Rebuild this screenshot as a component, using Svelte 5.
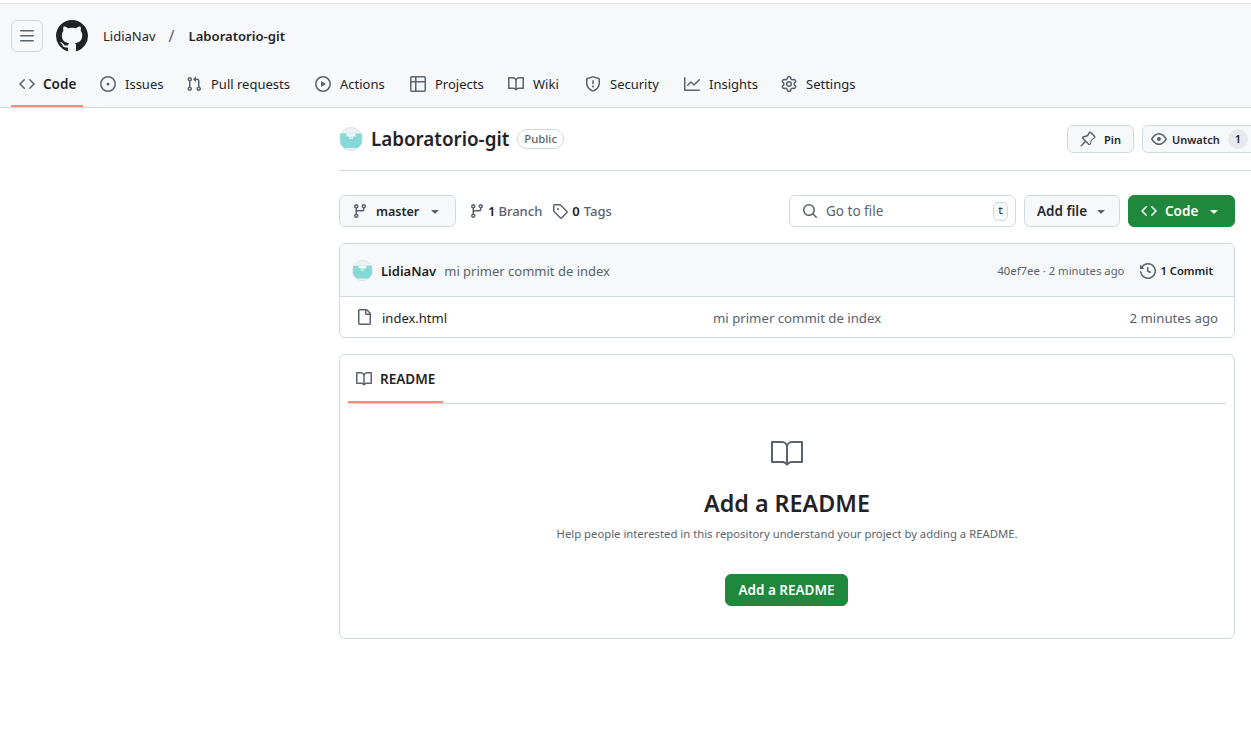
<script>
	const P = {
		code: 'm11.28 3.22 4.25 4.25a.75.75 0 0 1 0 1.06l-4.25 4.25a.749.749 0 0 1-1.275-.326.749.749 0 0 1 .215-.734L13.94 8l-3.72-3.72a.749.749 0 0 1 .326-1.275.749.749 0 0 1 .734.215Zm-6.56 0a.751.751 0 0 1 1.042.018.751.751 0 0 1 .018 1.042L2.06 8l3.72 3.72a.749.749 0 0 1-.326 1.275.749.749 0 0 1-.734-.215L.47 8.53a.75.75 0 0 1 0-1.06Z',
		issue: 'M8 9.5a1.5 1.5 0 1 0 0-3 1.5 1.5 0 0 0 0 3ZM8 0a8 8 0 1 1 0 16A8 8 0 0 1 8 0ZM1.5 8a6.5 6.5 0 1 0 13 0 6.5 6.5 0 0 0-13 0Z',
		pull: 'M1.5 3.25a2.25 2.25 0 1 1 3 2.122v5.256a2.251 2.251 0 1 1-1.5 0V5.372A2.25 2.25 0 0 1 1.5 3.25Zm5.677-.177L9.573.677A.25.25 0 0 1 10 .854V2.5h1A2.5 2.5 0 0 1 13.5 5v5.628a2.251 2.251 0 1 1-1.5 0V5a1 1 0 0 0-1-1h-1v1.646a.25.25 0 0 1-.427.177L7.177 3.427a.25.25 0 0 1 0-.354ZM3.75 2.5a.75.75 0 1 0 0 1.5.75.75 0 0 0 0-1.5Zm0 9.5a.75.75 0 1 0 0 1.5.75.75 0 0 0 0-1.5Zm8.25.75a.75.75 0 1 0 1.5 0 .75.75 0 0 0-1.5 0Z',
		play: 'M8 0a8 8 0 1 1 0 16A8 8 0 0 1 8 0ZM1.5 8a6.5 6.5 0 1 0 13 0 6.5 6.5 0 0 0-13 0Zm4.879-2.773 4.264 2.559a.25.25 0 0 1 0 .428l-4.264 2.559A.25.25 0 0 1 6 10.559V5.442a.25.25 0 0 1 .379-.215Z',
		table: 'M0 1.75C0 .784.784 0 1.75 0h12.5C15.216 0 16 .784 16 1.75v12.5A1.75 1.75 0 0 1 14.25 16H1.75A1.75 1.75 0 0 1 0 14.25ZM6.5 6.5v8h7.75a.25.25 0 0 0 .25-.25V6.5Zm8-1.5V1.75a.25.25 0 0 0-.25-.25H6.5V5Zm-13 1.5v7.75c0 .138.112.25.25.25H5v-8ZM5 5V1.5H1.75a.25.25 0 0 0-.25.25V5Z',
		book: 'M0 1.75A.75.75 0 0 1 .75 1h4.253c1.227 0 2.317.59 3 1.501A3.743 3.743 0 0 1 11.006 1h4.245a.75.75 0 0 1 .75.75v10.5a.75.75 0 0 1-.75.75h-4.507a2.25 2.25 0 0 0-1.591.659l-.622.621a.75.75 0 0 1-1.06 0l-.622-.621A2.25 2.25 0 0 0 5.258 13H.75a.75.75 0 0 1-.75-.75Zm7.251 10.324.004-5.073-.002-2.253A2.25 2.25 0 0 0 5.003 2.5H1.5v9h3.757a3.75 3.75 0 0 1 1.994.574ZM8.755 4.75l-.004 7.322a3.752 3.752 0 0 1 1.992-.572H14.5v-9h-3.495a2.25 2.25 0 0 0-2.25 2.25Z',
		book24: 'M0 3.75A.75.75 0 0 1 .75 3h7.497c1.566 0 2.945.8 3.751 2.014A4.495 4.495 0 0 1 15.75 3h7.5a.75.75 0 0 1 .75.75v15.063a.752.752 0 0 1-.755.75l-7.682-.052a3 3 0 0 0-2.142.878l-.89.891a.75.75 0 0 1-1.061 0l-.902-.901a2.996 2.996 0 0 0-2.121-.879H.75a.75.75 0 0 1-.75-.75Zm12.75 15.232a4.503 4.503 0 0 1 2.823-.971l6.927.047V4.5h-6.75a3 3 0 0 0-3 3ZM11.247 7.497a3 3 0 0 0-3-2.997H1.5V18h6.947c1.018 0 2.006.346 2.803.98Z',
		shield: 'M7.467.133a1.748 1.748 0 0 1 1.066 0l5.25 1.68A1.75 1.75 0 0 1 15 3.48V7c0 1.566-.32 3.182-1.303 4.682-.983 1.498-2.585 2.813-5.032 3.855a1.697 1.697 0 0 1-1.33 0c-2.447-1.042-4.049-2.357-5.032-3.855C1.32 10.182 1 8.566 1 7V3.48a1.75 1.75 0 0 1 1.217-1.667Zm.61 1.429a.25.25 0 0 0-.153 0l-5.25 1.68a.25.25 0 0 0-.174.238V7c0 1.358.275 2.666 1.057 3.86.784 1.194 2.121 2.34 4.366 3.297a.196.196 0 0 0 .154 0c2.245-.956 3.582-2.104 4.366-3.298C13.225 9.666 13.5 8.36 13.5 7V3.48a.251.251 0 0 0-.174-.237l-5.25-1.68ZM8.75 4.75v3a.75.75 0 0 1-1.5 0v-3a.75.75 0 0 1 1.5 0ZM9 10.5a1 1 0 1 1-2 0 1 1 0 0 1 2 0Z',
		graph: 'M1.5 1.75V13.5h13.75a.75.75 0 0 1 0 1.5H.75a.75.75 0 0 1-.75-.75V1.75a.75.75 0 0 1 1.5 0Zm14.28 2.53-5.25 5.25a.75.75 0 0 1-1.06 0L7 7.06 4.28 9.78a.751.751 0 0 1-1.042-.018.751.751 0 0 1-.018-1.042l3.25-3.25a.75.75 0 0 1 1.06 0L10 7.94l4.72-4.72a.751.751 0 0 1 1.042.018.751.751 0 0 1 .018 1.042Z',
		gear: 'M8 0a8.2 8.2 0 0 1 .701.031C9.444.095 9.99.645 10.16 1.29l.288 1.107c.018.066.079.158.212.224.231.114.454.243.668.386.123.082.233.09.299.071l1.103-.303c.644-.176 1.392.021 1.82.63.27.385.506.792.704 1.218.315.675.111 1.422-.364 1.891l-.814.806c-.049.048-.098.147-.088.294.016.257.016.515 0 .772-.01.147.038.246.088.294l.814.806c.475.469.679 1.216.364 1.891a7.977 7.977 0 0 1-.704 1.217c-.428.61-1.176.807-1.82.63l-1.102-.302c-.067-.019-.177-.011-.3.071a5.909 5.909 0 0 1-.668.386c-.133.066-.194.158-.211.224l-.29 1.106c-.168.646-.715 1.196-1.458 1.26a8.006 8.006 0 0 1-1.402 0c-.743-.064-1.289-.614-1.458-1.26l-.289-1.106c-.018-.066-.079-.158-.212-.224a5.738 5.738 0 0 1-.668-.386c-.123-.082-.233-.09-.299-.071l-1.103.303c-.644.176-1.392-.021-1.82-.63a8.12 8.12 0 0 1-.704-1.218c-.315-.675-.111-1.422.363-1.891l.815-.806c.05-.048.098-.147.088-.294a6.214 6.214 0 0 1 0-.772c.01-.147-.038-.246-.088-.294l-.815-.806C.635 6.045.431 5.298.746 4.623a7.92 7.92 0 0 1 .704-1.217c.428-.61 1.176-.807 1.82-.63l1.102.302c.067.019.177.011.3-.071.214-.143.437-.272.668-.386.133-.066.194-.158.211-.224l.29-1.106C6.009.645 6.556.095 7.299.03 7.53.01 7.764 0 8 0Zm-.571 1.525c-.036.003-.108.036-.137.146l-.289 1.105c-.147.561-.549.967-.998 1.189-.173.086-.34.183-.5.29-.417.278-.97.423-1.529.27l-1.103-.303c-.109-.03-.175.016-.195.045-.22.312-.412.644-.573.99-.014.031-.021.11.059.19l.815.806c.411.406.562.957.53 1.456a4.709 4.709 0 0 0 0 .582c.032.499-.119 1.05-.53 1.456l-.815.806c-.081.08-.073.159-.059.19.162.346.353.677.573.989.02.03.085.076.195.046l1.102-.303c.56-.153 1.113-.008 1.53.27.161.107.328.204.501.29.447.222.85.629.997 1.189l.289 1.105c.029.109.101.143.137.146a6.6 6.6 0 0 0 1.142 0c.036-.003.108-.036.137-.146l.289-1.105c.147-.561.549-.967.998-1.189.173-.086.34-.183.5-.29.417-.278.97-.423 1.529-.27l1.103.303c.109.029.175-.016.195-.045.22-.313.411-.644.573-.99.014-.031.021-.11-.059-.19l-.815-.806c-.411-.406-.562-.957-.53-1.456a4.709 4.709 0 0 0 0-.582c-.032-.499.119-1.05.53-1.456l.815-.806c.081-.08.073-.159.059-.19a6.464 6.464 0 0 0-.573-.989c-.02-.03-.085-.076-.195-.046l-1.102.303c-.56.153-1.113.008-1.53-.27a4.44 4.44 0 0 0-.501-.29c-.447-.222-.85-.629-.997-1.189l-.289-1.105c-.029-.11-.101-.143-.137-.146a6.6 6.6 0 0 0-1.142 0ZM11 8a3 3 0 1 1-6 0 3 3 0 0 1 6 0ZM9.5 8a1.5 1.5 0 1 0-3.001.001A1.5 1.5 0 0 0 9.5 8Z',
		bars: 'M1 2.75A.75.75 0 0 1 1.75 2h12.5a.75.75 0 0 1 0 1.5H1.75A.75.75 0 0 1 1 2.75Zm0 5A.75.75 0 0 1 1.75 7h12.5a.75.75 0 0 1 0 1.5H1.75A.75.75 0 0 1 1 7.75ZM1.75 12h12.5a.75.75 0 0 1 0 1.5H1.75a.75.75 0 0 1 0-1.5Z',
		github: 'M8 0c4.42 0 8 3.58 8 8a8.013 8.013 0 0 1-5.45 7.59c-.4.08-.55-.17-.55-.38 0-.27.01-1.13.01-2.2 0-.75-.25-1.23-.54-1.48 1.78-.2 3.65-.88 3.65-3.95 0-.88-.31-1.59-.82-2.15.08-.2.36-1.02-.08-2.12 0 0-.67-.22-2.2.82-.64-.18-1.32-.27-2-.27-.68 0-1.36.09-2 .27-1.53-1.03-2.2-.82-2.2-.82-.44 1.1-.16 1.92-.08 2.12-.51.56-.82 1.28-.82 2.15 0 3.06 1.86 3.75 3.64 3.95-.23.2-.44.55-.51 1.07-.46.21-1.61.55-2.33-.66-.15-.24-.6-.83-1.23-.82-.67.01-.27.38.01.53.34.19.73.9.82 1.13.16.45.68 1.31 2.69.94 0 .67.01 1.3.01 1.49 0 .21-.15.45-.55.38A7.995 7.995 0 0 1 0 8c0-4.42 3.58-8 8-8Z',
		pin: 'm11.294.984 3.722 3.722a1.75 1.75 0 0 1-.504 2.826l-1.327.613a3.089 3.089 0 0 0-1.707 2.084l-.584 2.454c-.317 1.332-1.972 1.8-2.94.832L5.75 11.311 1.78 15.28a.749.749 0 0 1-1.275-.326.749.749 0 0 1 .215-.734L4.69 10.25 2.487 8.047c-.968-.968-.5-2.623.832-2.94l2.454-.584a3.08 3.08 0 0 0 2.084-1.707l.613-1.327a1.75 1.75 0 0 1 2.824-.505Zm-1.06 1.06a.25.25 0 0 0-.403.072l-.613 1.328a4.582 4.582 0 0 1-3.098 2.537l-2.454.584a.25.25 0 0 0-.119.42l5.917 5.918a.25.25 0 0 0 .42-.12l.584-2.453a4.581 4.581 0 0 1 2.537-3.098l1.328-.613a.25.25 0 0 0 .072-.404Z',
		eye: 'M8 2c1.981 0 3.671.992 4.933 2.078 1.27 1.091 2.187 2.345 2.637 3.023a1.62 1.62 0 0 1 0 1.798c-.45.678-1.367 1.932-2.637 3.023C11.67 13.008 9.981 14 8 14c-1.981 0-3.671-.992-4.933-2.078C1.797 10.83.88 9.576.43 8.898a1.62 1.62 0 0 1 0-1.798c.45-.677 1.367-1.931 2.637-3.022C4.33 2.992 6.019 2 8 2ZM1.679 7.932a.12.12 0 0 0 0 .136c.411.622 1.241 1.75 2.366 2.717C5.176 11.758 6.527 12.5 8 12.5c1.473 0 2.825-.742 3.955-1.715 1.124-.967 1.954-2.096 2.366-2.717a.12.12 0 0 0 0-.136c-.412-.621-1.242-1.75-2.366-2.717C10.824 4.242 9.473 3.5 8 3.5c-1.473 0-2.825.742-3.955 1.715-1.124.967-1.954 2.096-2.366 2.717ZM8 10a2 2 0 1 1-.001-3.999A2 2 0 0 1 8 10Z',
		branch: 'M9.5 3.25a2.25 2.25 0 1 1 3 2.122V6A2.5 2.5 0 0 1 10 8.5H6a1 1 0 0 0-1 1v1.128a2.251 2.251 0 1 1-1.5 0V5.372a2.25 2.25 0 1 1 1.5 0v1.836A2.493 2.493 0 0 1 6 7h4a1 1 0 0 0 1-1v-.628A2.25 2.25 0 0 1 9.5 3.25Zm-6 0a.75.75 0 1 0 1.5 0 .75.75 0 0 0-1.5 0Zm8.25-.75a.75.75 0 1 0 0 1.5.75.75 0 0 0 0-1.5ZM4.25 12a.75.75 0 1 0 0 1.5.75.75 0 0 0 0-1.5Z',
		tag: 'M1 7.775V2.75C1 1.784 1.784 1 2.75 1h5.025c.464 0 .91.184 1.238.513l6.25 6.25a1.75 1.75 0 0 1 0 2.474l-5.026 5.026a1.75 1.75 0 0 1-2.474 0l-6.25-6.25A1.752 1.752 0 0 1 1 7.775Zm1.5 0c0 .066.026.13.073.177l6.25 6.25a.25.25 0 0 0 .354 0l5.025-5.025a.25.25 0 0 0 0-.354l-6.25-6.25a.25.25 0 0 0-.177-.073H2.75a.25.25 0 0 0-.25.25ZM6 5a1 1 0 1 1 0 2 1 1 0 0 1 0-2Z',
		search: 'M10.68 11.74a6 6 0 0 1-7.922-8.982 6 6 0 0 1 8.982 7.922l3.04 3.04a.749.749 0 0 1-.326 1.275.749.749 0 0 1-.734-.215ZM11.5 7a4.499 4.499 0 1 0-8.997 0A4.499 4.499 0 0 0 11.5 7Z',
		history: 'm.427 1.927 1.215 1.215a8.002 8.002 0 1 1-1.6 5.685.75.75 0 1 1 1.493-.154 6.5 6.5 0 1 0 1.18-4.458l1.358 1.358A.25.25 0 0 1 3.896 6H.25A.25.25 0 0 1 0 5.75V2.104a.25.25 0 0 1 .427-.177ZM7.75 4a.75.75 0 0 1 .75.75v2.992l2.028.812a.75.75 0 0 1-.557 1.392l-2.5-1A.751.751 0 0 1 7 8.25v-3.5A.75.75 0 0 1 7.75 4Z',
		file: 'M2 1.75C2 .784 2.784 0 3.75 0h6.586c.464 0 .909.184 1.237.513l2.914 2.914c.329.328.513.773.513 1.237v9.586A1.75 1.75 0 0 1 13.25 16H3.75A1.75 1.75 0 0 1 2 14.25Zm1.75-.25a.25.25 0 0 0-.25.25v12.5c0 .138.112.25.25.25h9.5a.25.25 0 0 0 .25-.25V6h-2.75A1.75 1.75 0 0 1 9 4.25V1.5Zm6.75.062V4.25c0 .138.112.25.25.25h2.688l-.011-.013-2.914-2.914-.013-.011Z',
		caret: 'm4.427 7.427 3.396 3.396a.25.25 0 0 0 .354 0l3.396-3.396A.25.25 0 0 0 11.396 7H4.604a.25.25 0 0 0-.177.427Z'
	};

	const tabs = [
		{ name: 'Code', icon: 'code', w: 72 },
		{ name: 'Issues', icon: 'issue', w: 77 },
		{ name: 'Pull requests', icon: 'pull', w: 120 },
		{ name: 'Actions', icon: 'play', w: 86 },
		{ name: 'Projects', icon: 'table', w: 89 },
		{ name: 'Wiki', icon: 'book', w: 68 },
		{ name: 'Security', icon: 'shield', w: 90 },
		{ name: 'Insights', icon: 'graph', w: 88 },
		{ name: 'Settings', icon: 'gear', w: 90 }
	];
</script>

{#snippet icon(name, size = 16, box = 16)}
	<svg class="ico" width={size} height={size} viewBox="0 0 {box} {box}" fill="currentColor"><path d={P[name]} /></svg>
{/snippet}

{#snippet avatar(size)}
	<svg class="avatar" width={size} height={size} viewBox="0 0 24 24">
		<circle cx="12" cy="12" r="11.5" fill="#eef1f1" stroke="#dde1e4" />
		<path d="M1.3 6.5H22.7V16A11 11 0 0 1 18.5 21H5.5A11 11 0 0 1 1.3 16Z" fill="#84d8d6" />
		<path d="M7.5 6.5h9v3h-2.5v2.5h-4V9.500h-2.500Z" fill="#eef8f8" />
		<path d="M10.500 9.500h3v2h-3Z" fill="#b9e9e8" />
	</svg>
{/snippet}

<div class="page">
	<div class="topline"></div>
	<header class="header">
		<div class="bar">
			<button class="burger">{@render icon('bars')}</button>
			<span class="logo">{@render icon('github', 32)}</span>
			<span class="owner">LidiaNav</span>
			<span class="slash">/</span>
			<strong class="repo">Laboratorio-git</strong>
		</div>
		<nav class="tabs">
			{#each tabs as t, i}
				<div class="tab" class:active={i === 0} style="width: {t.w}px">
					<span class="tabicon">{@render icon(t.icon)}</span>
					<span>{t.name}</span>
				</div>
			{/each}
		</nav>
	</header>

	<main class="main">
		<div class="head">
			{@render avatar(24)}
			<h1>Laboratorio-git</h1>
			<span class="public">Public</span>
			<div class="actions">
				<button class="btn small pinbtn">{@render icon('pin')}<span>Pin</span></button>
				<button class="btn small watch">{@render icon('eye')}<span>Unwatch</span><span class="count">1</span></button>
			</div>
		</div>

		<div class="content">
			<div class="toolbar">
				<button class="btn branchbtn">
					{@render icon('branch')}<span>master</span><span class="caret">{@render icon('caret')}</span>
				</button>
				<span class="meta first">{@render icon('branch')}<b>1</b> Branch</span>
				<span class="meta second">{@render icon('tag')}<b>0</b> Tags</span>
				<div class="search">
					{@render icon('search')}
					<span class="placeholder">Go to file</span>
					<kbd>t</kbd>
				</div>
				<button class="btn addfile"><span>Add file</span><span class="caret">{@render icon('caret')}</span></button>
				<button class="btn green codebtn">{@render icon('code')}<span>Code</span><span class="caret">{@render icon('caret')}</span></button>
			</div>

			<section class="files">
				<div class="commit">
					{@render avatar(21)}
					<b class="author">LidiaNav</b>
					<span class="msg">mi primer commit de index</span>
					<span class="sha">40ef7ee · 2 minutes ago</span>
					<span class="commits">{@render icon('history')}<b>1 Commit</b></span>
				</div>
				<div class="filerow">
					<span class="fileicon">{@render icon('file')}</span>
					<span class="fname">index.html</span>
					<span class="fmsg">mi primer commit de index</span>
					<span class="ftime">2 minutes ago</span>
				</div>
			</section>

			<section class="readme">
				<div class="rtabs">
					<div class="rtab">{@render icon('book')}<span>README</span></div>
				</div>
				<div class="rbody">
					<span class="bigbook">{@render icon('book24', 32, 24)}</span>
					<h2>Add a README</h2>
					<p>Help people interested in this repository understand your project by adding a README.</p>
					<button class="btn green addreadme">Add a README</button>
				</div>
			</section>
		</div>
	</main>
</div>

<style>
	:global(body) {
		margin: 0;
		background: #fff;
		font-family: 'Noto Sans', 'Open Sans', sans-serif;
		color: #1f2328;
	}

	.page {
		width: 1251px;
		height: 749px;
		overflow: hidden;
		font-size: 13.5px;
	}

	.ico {
		display: block;
		flex: none;
	}

	.topline {
		height: 3px;
		border-bottom: 1px solid #e8e2ee;
		background: #fff;
	}

	.header {
		background: #f6f8fa;
		border-bottom: 1px solid #d1d9e0;
		height: 104px;
		box-sizing: border-box;
		padding-top: 16px;
	}

	.bar {
		display: flex;
		align-items: center;
		height: 32px;
		padding-left: 11px;
	}

	.burger {
		width: 32px;
		height: 32px;
		box-sizing: border-box;
		display: flex;
		align-items: center;
		justify-content: center;
		background: #f6f8fa;
		border: 1px solid #d1d9e0;
		border-radius: 6px;
		color: #59636e;
		padding: 0;
	}

	.logo {
		margin-left: 13px;
		color: #1f2328;
	}

	.owner {
		margin-left: 15px;
		font-size: 13px;
	}

	.slash {
		margin: 0 14px 0 13px;
		color: #59636e;
		font-size: 16px;
	}

	.repo {
		font-weight: 600;
		font-size: 13.1px;
	}

	.tabs {
		display: flex;
		gap: 9px;
		margin-top: 10px;
		padding-left: 11px;
	}

	.tab {
		flex: none;
		display: flex;
		align-items: center;
		gap: 9px;
		height: 45px;
		box-sizing: border-box;
		padding: 1px 0 0 8px;
		color: #1f2328;
		font-size: 13px;
		border-bottom: 2px solid transparent;
		white-space: nowrap;
	}

	.tabicon {
		color: #59636e;
	}

	.tab.active {
		gap: 8px;
		font-size: 13.5px;
		font-weight: 600;
		border-bottom-color: #fd8c73;
	}

	.main {
		padding-left: 339px;
	}

	.head {
		display: flex;
		align-items: center;
		height: 63px;
		box-sizing: border-box;
		border-bottom: 1px solid #d1d9e0;
		gap: 8px;
	}

	h1 {
		margin: 0;
		font-size: 18.8px;
		font-weight: 600;
	}

	.public {
		font-size: 11.3px;
		font-weight: 500;
		color: #59636e;
		border: 1px solid #d1d9e0;
		border-radius: 10px;
		padding: 0 6px;
		line-height: 18px;
	}

	.actions {
		display: flex;
		gap: 8px;
		margin-left: auto;
		margin-right: -10px;
	}

	.btn {
		display: flex;
		align-items: center;
		box-sizing: border-box;
		height: 32px;
		background: #f6f8fa;
		border: 1px solid #d1d9e0;
		border-radius: 6px;
		color: #25292e;
		font: inherit;
		font-weight: 600;
		padding: 0 12px;
		white-space: nowrap;
	}

	.btn .ico {
		color: #59636e;
	}

	.btn.small {
		height: 28px;
		font-size: 11px;
	}

	.pinbtn {
		width: 67px;
		gap: 8px;
	}

	.watch {
		width: 119px;
		gap: 5px;
		padding: 0 0 0 8px;
	}

	.count {
		width: 20px;
		height: 20px;
		border-radius: 10px;
		background: #e6eaef;
		text-align: center;
		line-height: 20px;
		margin-left: 3px;
	}

	.content {
		width: 896px;
	}

	.toolbar {
		display: flex;
		align-items: center;
		margin-top: 24px;
	}

	.branchbtn {
		width: 117px;
		gap: 8px;
		font-size: 12.5px;
	}

	.caret {
		margin-left: auto;
	}

	.meta {
		display: flex;
		align-items: center;
		gap: 3px;
		color: #59636e;
		font-size: 13px;
		font-weight: 500;
		margin-left: 10px;
	}

	.meta.first {
		margin-left: 13px;
	}

	.meta.second {
		gap: 4px;
	}

	.meta b {
		color: #1f2328;
		font-weight: 600;
	}

	.search {
		margin-left: auto;
		width: 227px;
		height: 32px;
		box-sizing: border-box;
		display: flex;
		align-items: center;
		gap: 8px;
		padding: 0 7px 0 12px;
		border: 1px solid #d1d9e0;
		border-radius: 6px;
		color: #59636e;
	}

	kbd {
		margin-left: auto;
		font-family: 'Liberation Mono', monospace;
		font-size: 11px;
		line-height: 17px;
		padding: 0 3px;
		border: 1px solid #d1d9e0;
		border-radius: 5px;
		background: #f6f8fa;
		color: #1f2328;
	}

	.addfile {
		margin-left: 8px;
		width: 96px;
		padding-right: 10px;
	}

	.green {
		background: #1f883d;
		border-color: #1f883d;
		color: #fff;
	}

	.btn.green .ico {
		color: #fff;
	}

	.codebtn {
		margin-left: 8px;
		width: 107px;
		gap: 8px;
	}

	.files {
		margin-top: 16px;
		border: 1px solid #d1d9e0;
		border-radius: 6px;
		overflow: hidden;
	}

	.commit {
		display: flex;
		align-items: center;
		height: 53px;
		box-sizing: border-box;
		padding: 1px 21px 0 12px;
		background: #f6f8fa;
		border-bottom: 1px solid #d1d9e0;
	}

	.author {
		margin-left: 8px;
		font-size: 13px;
		font-weight: 600;
	}

	.msg {
		margin-left: 8px;
		font-size: 13px;
		color: #59636e;
	}

	.sha {
		margin-left: auto;
		font-size: 11.3px;
		color: #59636e;
	}

	.commits {
		display: flex;
		align-items: center;
		gap: 4px;
		margin-left: 16px;
		font-size: 11.2px;
	}

	.commits .ico {
		color: #59636e;
	}

	.commits b {
		font-weight: 600;
	}

	.filerow {
		display: flex;
		align-items: center;
		height: 40px;
		padding: 0 16px;
		color: #1f2328;
		font-size: 13.2px;
	}

	.fileicon {
		color: #59636e;
		margin-right: 10px;
	}

	.fname {
		width: 331px;
		padding-top: 2px;
		font-size: 13px;
	}

	.fmsg {
		padding-top: 2px;
		color: #59636e;
	}

	.ftime {
		margin-left: auto;
		padding-top: 2px;
		color: #59636e;
	}

	.readme {
		margin-top: 16px;
		border: 1px solid #d1d9e0;
		border-radius: 6px;
		height: 285px;
		box-sizing: border-box;
	}

	.rtabs {
		height: 48px;
		margin: 0 8px;
		border-bottom: 1px solid #d1d9e0;
	}

	.rtab {
		display: inline-flex;
		align-items: center;
		gap: 8px;
		height: 47px;
		padding: 0 8px;
		box-sizing: border-box;
		font-weight: 600;
		border-bottom: 2px solid #fd8c73;
		margin-top: 1px;
	}

	.rtab .ico {
		color: #59636e;
	}

	.rbody {
		display: flex;
		flex-direction: column;
		align-items: center;
	}

	.bigbook {
		color: #59636e;
		margin-top: 33px;
	}

	h2 {
		margin: 18px 0 0;
		font-size: 23.3px;
		font-weight: 600;
		line-height: 32px;
	}

	p {
		margin: 6px 0 0;
		font-size: 11.3px;
		line-height: 18px;
		color: #59636e;
	}

	.addreadme {
		margin-top: 31px;
		margin-right: 1px;
		justify-content: center;
		width: 123px;
	}
</style>
